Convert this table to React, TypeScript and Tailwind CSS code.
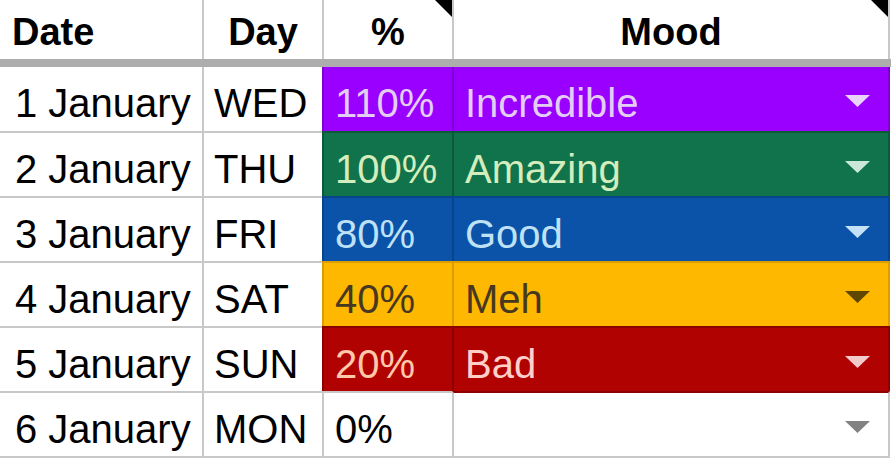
import React from "react";

type Row = {
  date: string;
  day: string;
  pct: string;
  mood: string;
  pctCls: string;
  moodCls: string;
  pctText: string;
  moodText: string;
  arrow: string;
};

const rows: Row[] = [
  {
    date: "1 January",
    day: "WED",
    pct: "110%",
    mood: "Incredible",
    pctCls: "bg-[#9900ff] border-[#7d00d0]",
    moodCls: "bg-[#9900ff] border-[#7d00d0]",
    pctText: "text-[#e3cdf5]",
    moodText: "text-[#e3cdf5]",
    arrow: "#ead3fb",
  },
  {
    date: "2 January",
    day: "THU",
    pct: "100%",
    mood: "Amazing",
    pctCls: "bg-[#11734b] border-[#0d5a3b]",
    moodCls: "bg-[#11734b] border-[#0d5a3b]",
    pctText: "text-[#d4edbc]",
    moodText: "text-[#d4edbc]",
    arrow: "#cbe7d8",
  },
  {
    date: "3 January",
    day: "FRI",
    pct: "80%",
    mood: "Good",
    pctCls: "bg-[#0a53a8] border-[#08448b]",
    moodCls: "bg-[#0a53a8] border-[#08448b]",
    pctText: "text-[#bfe1f6]",
    moodText: "text-[#bfe1f6]",
    arrow: "#c4e2f5",
  },
  {
    date: "4 January",
    day: "SAT",
    pct: "40%",
    mood: "Meh",
    pctCls: "bg-[#ffb800] border-[#dc9d00]",
    moodCls: "bg-[#ffb800] border-[#dc9d00]",
    pctText: "text-[#473821]",
    moodText: "text-[#473821]",
    arrow: "#5f4700",
  },
  {
    date: "5 January",
    day: "SUN",
    pct: "20%",
    mood: "Bad",
    pctCls: "bg-[#b10202] border-[#8c0000]",
    moodCls: "bg-[#b10202] border-[#8c0000]",
    pctText: "text-[#ffc8aa]",
    moodText: "text-[#ffcfc9]",
    arrow: "#f3caca",
  },
  {
    date: "6 January",
    day: "MON",
    pct: "0%",
    mood: "",
    pctCls: "bg-white border-[#c8c8c8]",
    moodCls: "bg-white border-[#c8c8c8] !border-t-[#8c0000]",
    pctText: "text-black",
    moodText: "text-black",
    arrow: "#828282",
  },
];

function Corner() {
  return (
    <svg className="absolute top-0 right-0" width="17" height="17" viewBox="0 0 17 17">
      <polygon points="0,0 17,0 17,17" fill="#000" />
    </svg>
  );
}

function Arrow({ color }: { color: string }) {
  return (
    <svg className="ml-auto mb-1 shrink-0" width="25" height="12" viewBox="0 0 25 12">
      <polygon points="0,0 25,0 12.5,12" fill={color} />
    </svg>
  );
}

export default function App() {
  return (
    <div className="w-[891px] h-[460px] bg-white font-['Liberation_Sans',Arial,sans-serif] text-black overflow-hidden">
      {/* Header */}
      <div className="flex h-[67px] border-b-8 border-[#adadad] text-[38px] font-bold leading-none">
        <div className="w-[204px] border-r-2 border-[#c8c8c8] pl-[12px] pt-[13px]">Date</div>
        <div className="w-[118px] text-center pt-[13px]">Day</div>
        <div className="relative w-[130px] border-l-2 border-[#c8c8c8] text-center pt-[13px]">
          %
          <Corner />
        </div>
        <div className="relative w-[438px] border-l-2 border-r-2 border-[#c8c8c8] text-center pt-[13px]">
          Mood
          <Corner />
        </div>
      </div>

      {rows.map((r, i) => {
        const first = i === 0;
        const last = i === rows.length - 1;
        const h = first ? "h-[64px]" : last ? "h-[67px] border-t-2 border-b-2" : "h-[65px] border-t-2";
        return (
          <div key={r.date} className="flex text-[40px] leading-[40px]">
            <div className={`w-[204px] ${h} border-r-2 border-[#c8c8c8] flex items-center pt-2 pl-[15px]`}>
              {r.date}
            </div>
            <div className={`w-[118px] ${h} border-[#c8c8c8] flex items-center pt-2 pl-[10px]`}>
              {r.day}
            </div>
            <div className={`w-[130px] ${h} border-l-2 ${r.pctCls} flex items-center pt-2 pl-[11px] ${r.pctText}`}>
              {r.pct}
            </div>
            <div className={`w-[438px] ${h} border-l-2 border-r-2 ${r.moodCls} flex items-center pt-2 pl-[11px] pr-[18px] ${r.moodText}`}>
              <span>{r.mood}</span>
              <Arrow color={r.arrow} />
            </div>
          </div>
        );
      })}
    </div>
  );
}
